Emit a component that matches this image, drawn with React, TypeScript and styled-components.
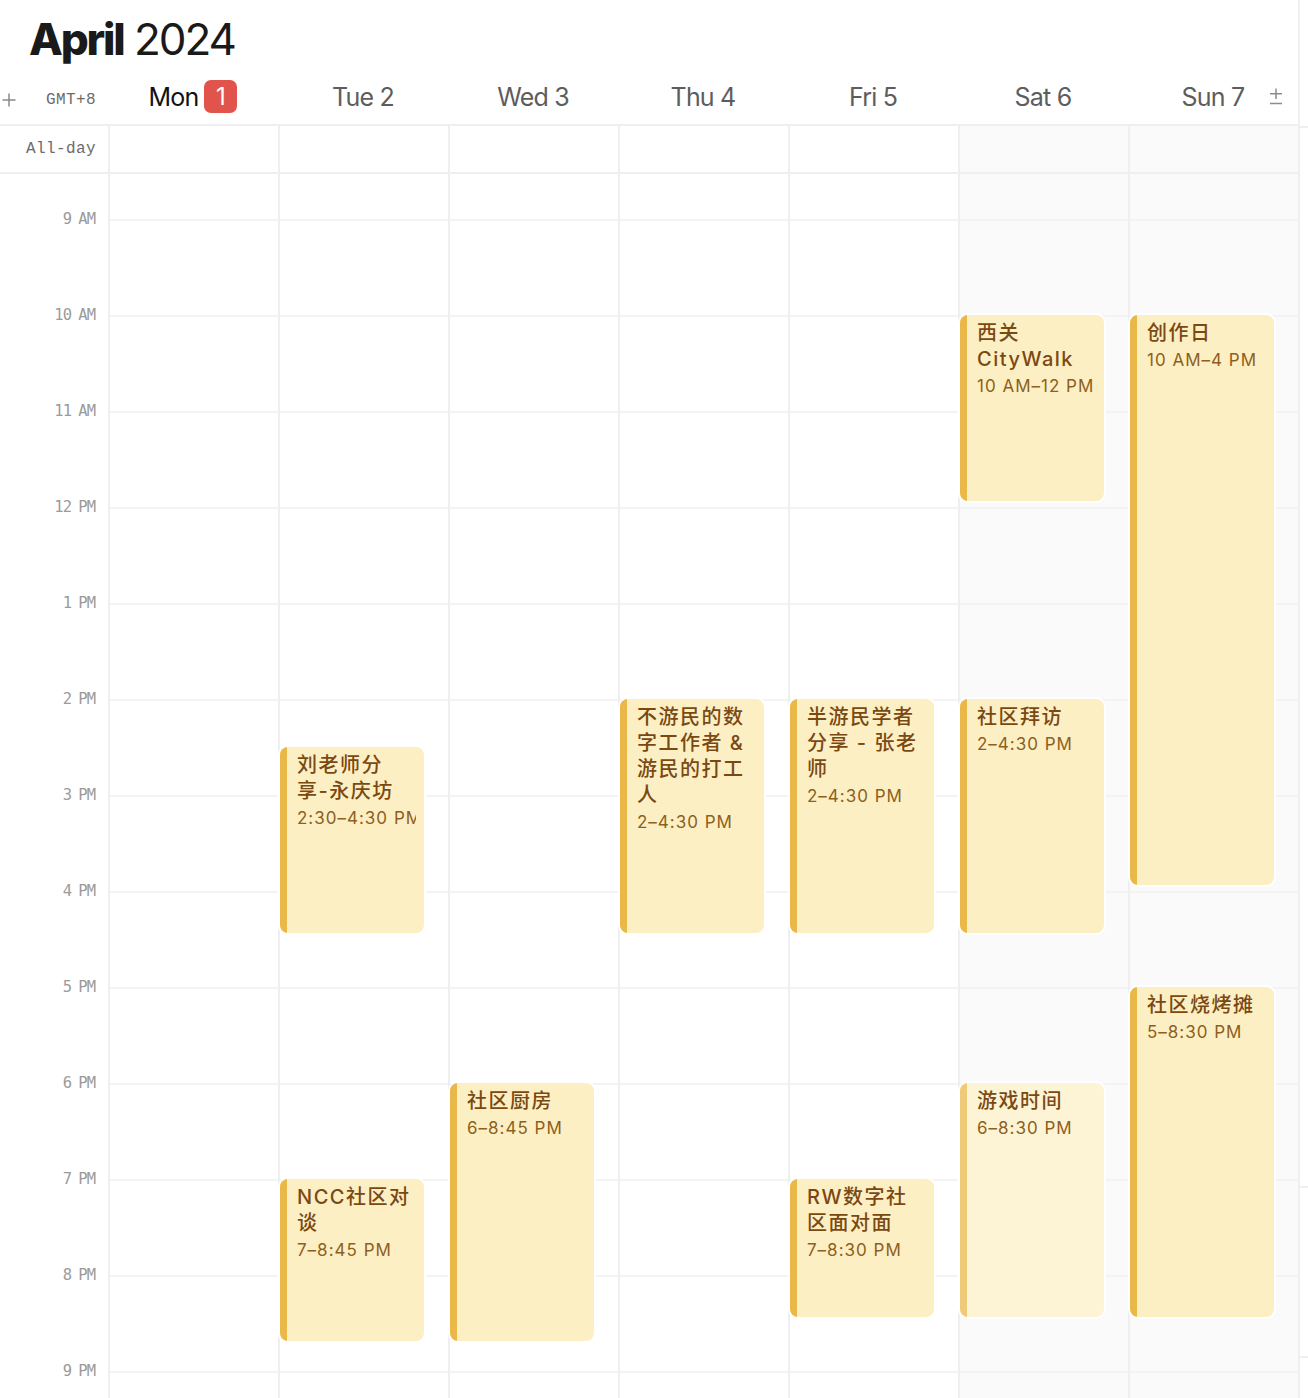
import React from "react";
import styled, { createGlobalStyle } from "styled-components";

const GlobalStyle = createGlobalStyle`
  html, body { margin: 0; padding: 0; background: #ffffff; overflow: hidden; }
  body { font-family: Inter, "Noto Sans CJK SC", sans-serif; }
  * { box-sizing: border-box; }
`;

const LINE = "#efefef";
const HOUR_LINE = "#f3f3f3";
const GRID = "108px repeat(7, 170px)";
const HOUR = 96;
const FIRST_LINE = 45;

const Page = styled.div`
  display: flex;
  width: 1308px;
  height: 1398px;
  overflow: hidden;
`;

const Calendar = styled.div`
  width: 1300px;
  flex-shrink: 0;
  border-right: 2px solid ${LINE};
  display: flex;
  flex-direction: column;
`;

const Strip = styled.div`
  flex: 1;
  display: flex;
  flex-direction: column;
`;

const StripSeg = styled.div<{ $h: number }>`
  height: ${(p) => p.$h}px;
  flex-shrink: 0;
  border-bottom: 2px solid ${LINE};
`;

const TitleBar = styled.h1`
  margin: 0;
  padding: 17px 0 0 29px;
  height: 61px;
  font-family: Inter, sans-serif;
  font-size: 44px;
  line-height: 44px;
  color: #1a1a1a;
  font-weight: 400;
  white-space: nowrap;
  word-spacing: -2px;
`;

const Month = styled.span`
  font-weight: 800;
  letter-spacing: -2.2px;
`;

const Year = styled.span`
  font-weight: 400;
  letter-spacing: -2px;
`;

const HeaderRow = styled.div`
  display: grid;
  grid-template-columns: ${GRID};
  height: 65px;
  padding-top: 8px;
  border-bottom: 2px solid ${LINE};
  align-items: center;
  position: relative;
`;

const HeaderGutter = styled.div`
  display: flex;
  align-items: center;
  justify-content: space-between;
  padding: 6px 12px 0 2px;
  height: 100%;
`;

const MonoLabel = styled.span`
  font-family: "Liberation Mono", "DejaVu Sans Mono", monospace;
  font-size: 16px;
  letter-spacing: 0.4px;
  color: #6b6b6b;
`;

const DayHead = styled.div<{ $today?: boolean }>`
  display: flex;
  align-items: center;
  justify-content: center;
  font-family: Inter, sans-serif;
  font-size: 25px;
  letter-spacing: -0.8px;
  color: ${(p) => (p.$today ? "#111111" : "#5d5d5d")};
`;

const Badge = styled.span`
  display: inline-flex;
  align-items: center;
  justify-content: center;
  width: 33px;
  height: 33px;
  margin-left: 6px;
  border-radius: 7px;
  background: #e0544b;
  color: #ffffff;
  font-size: 24px;
  letter-spacing: 0;
`;

const PlusMinus = styled.span`
  position: absolute;
  right: 15px;
  top: 27px;
  display: flex;
`;

const AllDayRow = styled.div`
  display: grid;
  grid-template-columns: ${GRID};
  height: 48px;
  border-bottom: 2px solid ${LINE};
`;

const AllDayGutter = styled.div`
  display: flex;
  align-items: center;
  justify-content: flex-end;
  padding-right: 12px;
`;

const Cell = styled.div<{ $weekend?: boolean }>`
  border-left: 2px solid ${LINE};
  background: ${(p) => (p.$weekend ? "#fafafa" : "#ffffff")};
`;

const Body = styled.div`
  flex: 1;
  display: grid;
  grid-template-columns: ${GRID};
  overflow: hidden;
`;

const TimeGutter = styled.div`
  display: flex;
  flex-direction: column;
  align-items: flex-end;
  padding-right: 13px;
  overflow: hidden;
`;

const TimeLabel = styled.div<{ $first?: boolean }>`
  flex-shrink: 0;
  height: ${HOUR}px;
  line-height: ${HOUR}px;
  margin-top: ${(p) => (p.$first ? FIRST_LINE - HOUR / 2 : 0)}px;
  font-family: "DejaVu Sans Mono", "Liberation Mono", monospace;
  font-size: 15.5px;
  letter-spacing: -1px;
  word-spacing: -1px;
  color: #9b9b9b;
  white-space: nowrap;
`;

const DayCol = styled.div<{ $weekend?: boolean }>`
  position: relative;
  display: flex;
  flex-direction: column;
  border-left: 2px solid ${LINE};
  background: ${(p) => (p.$weekend ? "#fafafa" : "#ffffff")};
`;

const TopSpace = styled.div`
  height: ${FIRST_LINE}px;
  flex-shrink: 0;
`;

const HourSlot = styled.div`
  height: ${HOUR}px;
  flex-shrink: 0;
  border-top: 2px solid ${HOUR_LINE};
`;

const EventCard = styled.div<{ $light?: boolean }>`
  position: absolute;
  left: -2px;
  right: 22px;
  display: flex;
  border: 2px solid #ffffff;
  border-radius: 10px;
  overflow: hidden;
  padding-right: 8px;
  background: ${(p) => (p.$light ? "#fdf4d6" : "#fdefc4")};
`;

const EventBar = styled.div<{ $light?: boolean }>`
  width: 7px;
  flex-shrink: 0;
  background: ${(p) => (p.$light ? "#efca78" : "#e9b849")};
`;

const EventContent = styled.div`
  flex: 1;
  min-width: 0;
  overflow: hidden;
  padding: 5px 0 0 10px;
`;

const EventTitle = styled.div`
  font-family: Inter, "Noto Sans CJK SC", sans-serif;
  font-size: 20px;
  line-height: 26px;
  font-weight: 500;
  letter-spacing: 1.5px;
  color: #7a4912;
`;

const TitleLine = styled.span`
  display: block;
  white-space: nowrap;
`;

const EventTime = styled.div`
  margin-top: 2px;
  font-family: Inter, sans-serif;
  font-size: 17px;
  line-height: 24px;
  letter-spacing: 1px;
  color: #8d5f20;
  white-space: nowrap;
`;

type Ev = { lines: string[]; start: number; end: number; time: string; light?: boolean };

const days: { name: string; num: string; today?: boolean; weekend?: boolean; events: Ev[] }[] = [
  { name: "Mon", num: "1", today: true, events: [] },
  {
    name: "Tue",
    num: "2",
    events: [
      { lines: ["刘老师分", "享-永庆坊"], start: 14.5, end: 16.5, time: "2:30–4:30 PM" },
      { lines: ["NCC社区对", "谈"], start: 19, end: 20.75, time: "7–8:45 PM" },
    ],
  },
  {
    name: "Wed",
    num: "3",
    events: [{ lines: ["社区厨房"], start: 18, end: 20.75, time: "6–8:45 PM" }],
  },
  {
    name: "Thu",
    num: "4",
    events: [
      { lines: ["不游民的数", "字工作者 &", "游民的打工", "人"], start: 14, end: 16.5, time: "2–4:30 PM" },
    ],
  },
  {
    name: "Fri",
    num: "5",
    events: [
      { lines: ["半游民学者", "分享 - 张老", "师"], start: 14, end: 16.5, time: "2–4:30 PM" },
      { lines: ["RW数字社", "区面对面"], start: 19, end: 20.5, time: "7–8:30 PM" },
    ],
  },
  {
    name: "Sat",
    num: "6",
    weekend: true,
    events: [
      { lines: ["西关", "CityWalk"], start: 10, end: 12, time: "10 AM–12 PM" },
      { lines: ["社区拜访"], start: 14, end: 16.5, time: "2–4:30 PM" },
      { lines: ["游戏时间"], start: 18, end: 20.5, time: "6–8:30 PM", light: true },
    ],
  },
  {
    name: "Sun",
    num: "7",
    weekend: true,
    events: [
      { lines: ["创作日"], start: 10, end: 16, time: "10 AM–4 PM" },
      { lines: ["社区烧烤摊"], start: 17, end: 20.5, time: "5–8:30 PM" },
    ],
  },
];

const hours = ["9 AM", "10 AM", "11 AM", "12 PM", "1 PM", "2 PM", "3 PM", "4 PM", "5 PM", "6 PM", "7 PM", "8 PM", "9 PM"];

const PlusIcon = () => (
  <svg width="14" height="14" viewBox="0 0 14 14" fill="none" stroke="#8a8a8a" strokeWidth="1.5">
    <line x1="7" y1="0.5" x2="7" y2="13.5" />
    <line x1="0.5" y1="7" x2="13.5" y2="7" />
  </svg>
);

const PlusMinusIcon = () => (
  <svg width="14" height="17" viewBox="0 0 14 17" fill="none" stroke="#8c8c8c" strokeWidth="1.5">
    <line x1="7" y1="0.5" x2="7" y2="11" />
    <line x1="1" y1="5.75" x2="13" y2="5.75" />
    <line x1="1" y1="15.5" x2="13" y2="15.5" />
  </svg>
);

export default function App() {
  return (
    <>
      <GlobalStyle />
      <Page>
        <Calendar>
          <TitleBar>
            <Month>April</Month> <Year>2024</Year>
          </TitleBar>
          <HeaderRow>
            <HeaderGutter>
              <PlusIcon />
              <MonoLabel>GMT+8</MonoLabel>
            </HeaderGutter>
            {days.map((d) => (
              <DayHead key={d.name} $today={d.today}>
                {d.today ? (
                  <>
                    {d.name}
                    <Badge>{d.num}</Badge>
                  </>
                ) : (
                  `${d.name} ${d.num}`
                )}
              </DayHead>
            ))}
            <PlusMinus>
              <PlusMinusIcon />
            </PlusMinus>
          </HeaderRow>
          <AllDayRow>
            <AllDayGutter>
              <MonoLabel>All-day</MonoLabel>
            </AllDayGutter>
            {days.map((d) => (
              <Cell key={d.name} $weekend={d.weekend} />
            ))}
          </AllDayRow>
          <Body>
            <TimeGutter>
              {hours.map((h, i) => (
                <TimeLabel key={h} $first={i === 0}>
                  {h}
                </TimeLabel>
              ))}
            </TimeGutter>
            {days.map((d) => (
              <DayCol key={d.name} $weekend={d.weekend}>
                <TopSpace />
                {hours.map((h) => (
                  <HourSlot key={h} />
                ))}
                {d.events.map((e) => (
                  <EventCard
                    key={e.lines.join("")}
                    $light={e.light}
                    style={{
                      top: FIRST_LINE + (e.start - 9) * HOUR - 2,
                      height: (e.end - e.start) * HOUR - 2,
                    }}
                  >
                    <EventBar $light={e.light} />
                    <EventContent>
                      <EventTitle>
                        {e.lines.map((l) => (
                          <TitleLine key={l}>{l}</TitleLine>
                        ))}
                      </EventTitle>
                      <EventTime>{e.time}</EventTime>
                    </EventContent>
                  </EventCard>
                ))}
              </DayCol>
            ))}
          </Body>
        </Calendar>
        <Strip>
          <StripSeg $h={128} />
          <StripSeg $h={1060} />
          <StripSeg $h={170} />
        </Strip>
      </Page>
    </>
  );
}
